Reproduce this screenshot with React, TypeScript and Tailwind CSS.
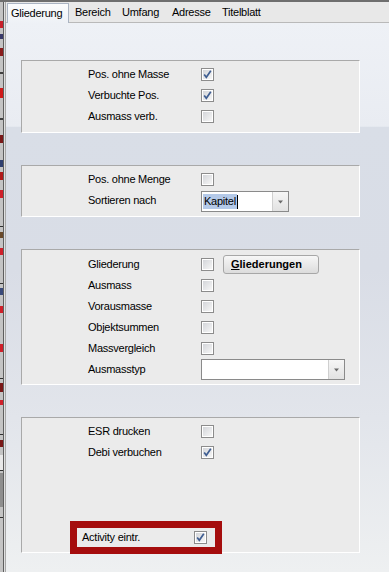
import React from "react";

const FONT = { fontFamily: '"Liberation Sans", Arial, sans-serif' };

const marks: [number, number, string][] = [
  [21, 7, "#c8202a"],
  [34, 5, "#3a3a6a"],
  [48, 8, "#8a1c1c"],
  [72, 2, "#404040"],
  [88, 10, "#d01a1a"],
  [118, 2, "#404040"],
  [135, 8, "#7a1818"],
  [160, 7, "#304070"],
  [172, 8, "#b01a1a"],
  [190, 8, "#d0202a"],
  [226, 1, "#303030"],
  [232, 6, "#6b4a2a"],
  [248, 7, "#d0202a"],
  [283, 1, "#303030"],
  [288, 7, "#3a4a7a"],
  [306, 7, "#d0202a"],
  [344, 8, "#d0202a"],
  [378, 1, "#303030"],
  [383, 9, "#7a1818"],
  [400, 5, "#d0202a"],
  [434, 1, "#303030"],
  [440, 7, "#7a1818"],
  [455, 15, "#e8e8e8"],
  [470, 1, "#303030"],
  [473, 34, "#8e8e8e"],
  [517, 1, "#303030"],
];

function Gutter() {
  let y = 2;
  const items: React.ReactNode[] = [];
  marks.forEach(([top, h, c], i) => {
    if (top > y) items.push(<div key={"s" + i} style={{ height: top - y }} />);
    items.push(<div key={"m" + i} style={{ height: h, background: c }} />);
    y = top + h;
  });
  return (
    <div className="flex shrink-0">
      <div className="w-[3px] bg-[#c4c4c4] flex flex-col">{items}</div>
      <div className="w-px bg-[#5e5e5e]" />
      <div className="w-px bg-[#e0e0e0]" />
      <div className="w-px bg-[#a8a8a8]" />
    </div>
  );
}

function Cb({ checked }: { checked?: boolean }) {
  return (
    <div className="relative w-[13px] h-[13px] border border-[#8c8c8c] bg-white p-px flex shrink-0">
      <div className="flex-1 bg-gradient-to-br from-[#d4d6da] to-[#f6f6f6]" />
      {checked && (
        <svg className="absolute left-0 top-0" width="11" height="11" viewBox="0 0 11 11">
          <polyline points="2.2,5.6 4.3,8.3 8.8,1.8" fill="none" stroke="#3f5e92" strokeWidth="1.7" />
        </svg>
      )}
    </div>
  );
}

function Combo({ width, text }: { width: number; text?: string }) {
  return (
    <div
      className="h-[21px] border border-[#8a8a8a] bg-white flex items-stretch"
      style={{ width }}
    >
      <div className="flex-1 flex items-center pl-px">
        {text && (
          <>
            <span className="bg-[#b4c9e8] leading-[15px] px-px">{text}</span>
            <span className="w-px h-[14px] bg-black" />
          </>
        )}
      </div>
      <div className="w-[16px] border-l border-[#cfcfcf] bg-gradient-to-b from-[#f6f6f6] to-[#e2e2e2] flex items-center justify-center">
        <svg width="7" height="4" viewBox="0 0 7 4">
          <polygon points="1,0.5 6,0.5 3.5,3.5" fill="#6a6a6a" />
        </svg>
      </div>
    </div>
  );
}

function Row({ label, children }: { label: string; children?: React.ReactNode }) {
  return (
    <div className="h-[21px] flex items-center pl-[66px]">
      <div className="w-[113px] shrink-0">{label}</div>
      {children}
    </div>
  );
}

function Box({ h, pt, children }: { h: number; pt: string; children: React.ReactNode }) {
  return (
    <div
      className={`w-[339px] border border-t-[#a9a9a9] border-l-[#a9a9a9] border-r-white border-b-white bg-[#ebebeb] flex flex-col ${pt}`}
      style={{ height: h }}
    >
      {children}
    </div>
  );
}

const tabs = [
  { label: "Bereich", w: 47 },
  { label: "Umfang", w: 50 },
  { label: "Adresse", w: 50 },
  { label: "Titelblatt", w: 60 },
];

export default function App() {
  return (
    <div
      className="relative w-[389px] h-[572px] overflow-hidden flex flex-col bg-[#e8e8e8] text-[11px] tracking-[-0.25px] text-black"
      style={FONT}
    >
      <div className="h-[2px] bg-[#6e6e6e] shrink-0" />
      <div className="flex flex-1">
        <Gutter />
        <div className="flex-1 flex flex-col">
          {/* tab strip */}
          <div className="h-[21px] shrink-0 bg-[#e8e8e8] border-b border-[#b9b9b9] flex items-end">
            <div className="ml-px w-[62px] h-[20px] -mb-px border border-b-0 border-[#aab4c3] bg-gradient-to-b from-[#fbfcfd] to-[#eef1f6] pl-[3px] flex items-center">
              Gliederung
            </div>
            {tabs.map((t) => (
              <div
                key={t.label}
                className="h-[20px] pl-[6px] flex items-center"
                style={{ width: t.w }}
              >
                {t.label}
              </div>
            ))}
          </div>
          {/* content */}
          <div className="flex-1 pl-[15px] pt-[37px] flex flex-col gap-[32px] bg-[linear-gradient(180deg,#eef1f6_0%,#e9ecf2_18.8%,#d9dee7_19%,#d9dde6_45%,#e2e5eb_72%,#eef0f1_100%)]">
            <Box h={73} pt="pt-[3px]">
              <Row label="Pos. ohne Masse">
                <Cb checked />
              </Row>
              <Row label="Verbuchte Pos.">
                <Cb checked />
              </Row>
              <Row label="Ausmass verb.">
                <Cb />
              </Row>
            </Box>
            <Box h={52} pt="pt-[3px]">
              <Row label="Pos. ohne Menge">
                <Cb />
              </Row>
              <Row label="Sortieren nach">
                <div className="mt-[2px]">
                  <Combo width={88} text="Kapitel" />
                </div>
              </Row>
            </Box>
            <Box h={136} pt="pt-[4px]">
              <Row label="Gliederung">
                <Cb />
                <div className="ml-[9px] w-[96px] h-[19px] rounded-[3px] border border-[#a7a7a7] bg-gradient-to-b from-[#f7f7f7] to-[#dcdcdc] flex items-center pl-[7px] font-bold tracking-normal">
                  <span className="underline underline-offset-1">G</span>liederungen
                </div>
              </Row>
              <Row label="Ausmass">
                <Cb />
              </Row>
              <Row label="Vorausmasse">
                <Cb />
              </Row>
              <Row label="Objektsummen">
                <Cb />
              </Row>
              <Row label="Massvergleich">
                <Cb />
              </Row>
              <Row label="Ausmasstyp">
                <Combo width={144} />
              </Row>
            </Box>
            <Box h={136} pt="pt-[3px]">
              <Row label="ESR drucken">
                <Cb />
              </Row>
              <Row label="Debi verbuchen">
                <Cb checked />
              </Row>
            </Box>
          </div>
        </div>
      </div>
      {/* red highlight annotation */}
      <div className="absolute left-[70px] top-[521px] w-[152px] h-[33px] border-[7px] border-[#a50d0d] bg-[#ebebeb] flex items-center pl-[5px]">
        <div className="w-[112px]">Activity eintr.</div>
        <Cb checked />
      </div>
    </div>
  );
}
